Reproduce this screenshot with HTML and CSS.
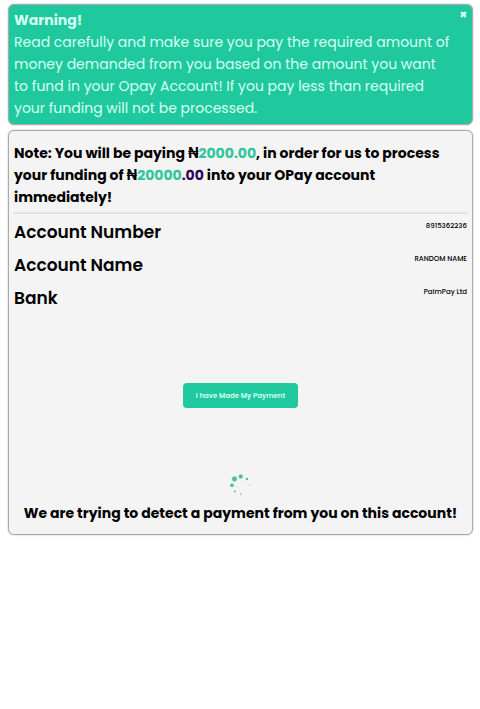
FILE: index.html
```html
<!DOCTYPE html>
<html lang="en">
<head>
<meta charset="utf-8">
<meta name="viewport" content="width=device-width, initial-scale=1">
<title>Fund your account</title>
<link rel="stylesheet" href="styles.css">
</head>
<body>
<main class="page">
  <section class="card warning">
    <button class="close" type="button" aria-label="Close">
      <svg viewBox="0 0 6 6" aria-hidden="true"><path d="M1 1L5 5M5 1L1 5"/></svg>
    </button>
    <strong class="warning-title">Warning!</strong>
    <p class="warning-text">Read carefully and make sure you pay the required amount of money demanded from you based on the amount you want to fund in your Opay Account! If you pay less than required your funding will not be processed.</p>
  </section>
  <section class="card payment">
    <p class="note">Note: You will be paying ₦<span class="amount">2000.00</span>, in order for us to process your funding of ₦<span class="amount">20000</span><span class="cents">.00</span> into your OPay account immediately!</p>
    <hr class="divider">
    <dl class="details">
      <div class="row"><dt>Account Number</dt><dd>8915362236</dd></div>
      <div class="row"><dt>Account Name</dt><dd>RANDOM NAME</dd></div>
      <div class="row"><dt>Bank</dt><dd>PalmPay Ltd</dd></div>
    </dl>
    <button class="confirm" type="button">I have Made My Payment</button>
    <svg class="spinner" viewBox="0 0 28 28" aria-hidden="true">
      <circle class="glow" cx="7.5" cy="8" r="3.2"/>
      <circle class="glow" cx="13.7" cy="5.4" r="2.8"/>
      <circle class="glow" cx="5" cy="14.2" r="2.6"/>
      <circle cx="7.5" cy="8" r="2.4"/>
      <circle cx="13.7" cy="5.4" r="2"/>
      <circle cx="5" cy="14.2" r="1.8"/>
      <circle cx="20" cy="8" r="1.2"/>
      <circle cx="7.8" cy="20.5" r="1"/>
      <circle cx="13.8" cy="23" r=".7"/>
      <circle cx="22.8" cy="14" r=".5"/>
    </svg>
    <p class="status">We are trying to detect a payment from you on this account!</p>
  </section>
</main>
</body>
</html>
```
FILE: styles.css
```css
* {
  box-sizing: border-box;
}

body {
  margin: 0;
  background: #fff;
  color: #000;
  font-family: Poppins, Inter, sans-serif;
  font-size: 14px;
  line-height: 22px;
}

p,
dl,
dd {
  margin: 0;
}

button {
  border: 0;
  font: inherit;
  cursor: pointer;
}

.page {
  display: flex;
  flex-direction: column;
  gap: 5px;
  padding: 4px 7px 4px 8px;
}

.card {
  position: relative;
  padding: 5px;
  border: 1px solid #aaa;
  border-radius: 6px;
  box-shadow: 0 0 2px #bbb;
}

.warning {
  background: #20c99d;
  color: #d5fff3;
}

.warning-title {
  display: block;
  font-weight: 700;
  line-height: 21px;
}

.warning-text {
  padding-right: 16px;
}

.close {
  position: absolute;
  top: 6px;
  right: 5px;
  display: flex;
  padding: 0;
  background: none;
}

.close svg {
  width: 7px;
  height: 7px;
  fill: none;
  stroke: #e4fff8;
  stroke-width: 2;
}

.payment {
  display: flex;
  flex-direction: column;
  padding-top: 11px;
  background: #f4f4f4;
}

.note {
  font-weight: 700;
}

.amount {
  color: #31c59c;
}

.cents {
  color: #2d0758;
}

.divider {
  width: 100%;
  height: 2px;
  margin: 4px 0 2px;
  border: 0;
  background: #e2e2e2;
}

.row {
  display: flex;
  justify-content: space-between;
  height: 33px;
}

dt {
  font-size: 17px;
  font-weight: 600;
  line-height: 32px;
}

dd {
  font-size: 7px;
  font-weight: 500;
  line-height: 20px;
}

.confirm {
  align-self: center;
  margin: 68px 0 63px;
  padding: 0 13px;
  height: 25px;
  border-radius: 4px;
  background: #20c99d;
  color: #d5fff3;
  font-size: 7px;
  font-weight: 600;
}

.spinner {
  align-self: center;
  width: 28px;
  height: 28px;
  margin-bottom: 3px;
  fill: #55b79e;
}

.glow {
  fill: #d8f5ec;
}

.status {
  margin-bottom: 5px;
  font-weight: 700;
  text-align: center;
}
```
